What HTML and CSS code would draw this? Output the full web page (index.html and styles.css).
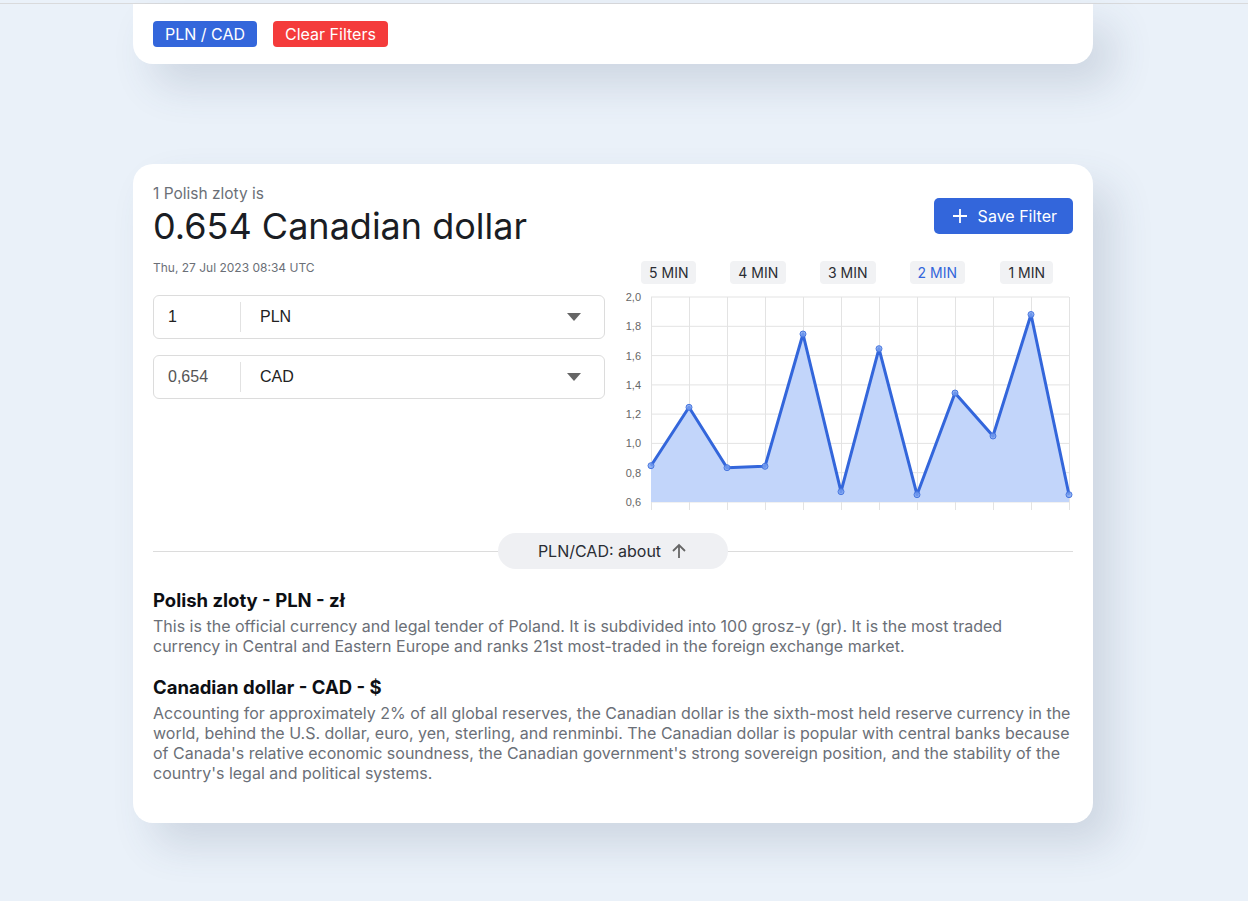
FILE: index.html
```html
<!DOCTYPE html>
<html>
<head>
<meta charset="utf-8">
<link rel="stylesheet" href="styles.css">
</head>
<body>
<div class="topline"></div>
<div class="filters card-top">
  <span class="tag tag-blue">PLN / CAD</span>
  <span class="tag tag-red">Clear Filters</span>
</div>

<div class="card">
  <div class="header">
    <div class="heading-block">
      <div class="sub">1 Polish zloty is</div>
      <div class="title">0.654 Canadian dollar</div>
    </div>
    <button class="save">
      <svg width="16" height="16" viewBox="0 0 16 16"><path d="M8 1v14M1 8h14" stroke="#fff" stroke-width="1.8" fill="none"/></svg>
      <span>Save Filter</span>
    </button>
  </div>

  <div class="main">
    <div class="left">
      <div class="date">Thu, 27 Jul 2023 08:34 UTC</div>
      <div class="field">
        <span class="amount">1</span>
        <span class="sep"></span>
        <span class="cur">PLN</span>
        <span class="caret"></span>
      </div>
      <div class="field">
        <span class="amount muted">0,654</span>
        <span class="sep"></span>
        <span class="cur">CAD</span>
        <span class="caret"></span>
      </div>
    </div>
    <div class="right">
      <div class="ranges">
        <span class="range">5 MIN</span>
        <span class="range">4 MIN</span>
        <span class="range">3 MIN</span>
        <span class="range active">2 MIN</span>
        <span class="range">1 MIN</span>
      </div>
      <svg class="chart" width="468" height="230" viewBox="0 0 468 230">
        <g stroke="#e3e3e3" stroke-width="1">
          <line x1="46" y1="9" x2="464" y2="9"/>
          <line x1="46" y1="38.3" x2="464" y2="38.3"/>
          <line x1="46" y1="67.6" x2="464" y2="67.6"/>
          <line x1="46" y1="96.9" x2="464" y2="96.9"/>
          <line x1="46" y1="126.1" x2="464" y2="126.1"/>
          <line x1="46" y1="155.4" x2="464" y2="155.4"/>
          <line x1="46" y1="184.7" x2="464" y2="184.7"/>
          <line x1="46" y1="214" x2="464" y2="214"/>
          <line x1="46.5" y1="9" x2="46.5" y2="222"/>
          <line x1="84.5" y1="9" x2="84.5" y2="222"/>
          <line x1="122.5" y1="9" x2="122.5" y2="222"/>
          <line x1="160.5" y1="9" x2="160.5" y2="222"/>
          <line x1="198.5" y1="9" x2="198.5" y2="222"/>
          <line x1="236.5" y1="9" x2="236.5" y2="222"/>
          <line x1="274.5" y1="9" x2="274.5" y2="222"/>
          <line x1="312.5" y1="9" x2="312.5" y2="222"/>
          <line x1="350.5" y1="9" x2="350.5" y2="222"/>
          <line x1="388.5" y1="9" x2="388.5" y2="222"/>
          <line x1="426.5" y1="9" x2="426.5" y2="222"/>
          <line x1="464.5" y1="9" x2="464.5" y2="222"/>
        </g>
        <g class="ticks" text-anchor="end">
          <text x="36" y="13">2,0</text>
          <text x="36" y="42.3">1,8</text>
          <text x="36" y="71.6">1,6</text>
          <text x="36" y="100.9">1,4</text>
          <text x="36" y="130.1">1,2</text>
          <text x="36" y="159.4">1,0</text>
          <text x="36" y="188.7">0,8</text>
          <text x="36" y="218">0,6</text>
        </g>
        <polygon fill="#c2d5fa" points="46,214 46,177.7 84,119.3 122,179.7 160,178.3 198,46 236,203.7 274,60.7 312,206.7 350,105 388,148 426,26.5 464,206.7 464,214"/>
        <polyline fill="none" stroke="#3366db" stroke-width="3" stroke-linejoin="round" points="46,177.7 84,119.3 122,179.7 160,178.3 198,46 236,203.7 274,60.7 312,206.7 350,105 388,148 426,26.5 464,206.7"/>
        <g fill="rgba(120,160,240,0.8)" stroke="#4a78e0" stroke-width="1">
          <circle cx="46" cy="177.7" r="3"/>
          <circle cx="84" cy="119.3" r="3"/>
          <circle cx="122" cy="179.7" r="3"/>
          <circle cx="160" cy="178.3" r="3"/>
          <circle cx="198" cy="46" r="3"/>
          <circle cx="236" cy="203.7" r="3"/>
          <circle cx="274" cy="60.7" r="3"/>
          <circle cx="312" cy="206.7" r="3"/>
          <circle cx="350" cy="105" r="3"/>
          <circle cx="388" cy="148" r="3"/>
          <circle cx="426" cy="26.5" r="3"/>
          <circle cx="464" cy="206.7" r="3"/>
        </g>
      </svg>
    </div>
  </div>

  <div class="divider">
    <span class="pill">PLN/CAD: about
      <svg width="18" height="18" viewBox="0 0 18 18"><path d="M9 16V3M3 9l6-6 6 6" stroke="#666" stroke-width="1.8" fill="none"/></svg>
    </span>
  </div>

  <div class="about">
    <h3>Polish zloty - PLN - zł</h3>
    <p>This is the official currency and legal tender of Poland. It is subdivided into 100 grosz-y (gr). It is the most traded currency in Central and Eastern Europe and ranks 21st most-traded in the foreign exchange market.</p>
    <h3>Canadian dollar - CAD - $</h3>
    <p>Accounting for approximately 2% of all global reserves, the Canadian dollar is the sixth-most held reserve currency in the world, behind the U.S. dollar, euro, yen, sterling, and renminbi. The Canadian dollar is popular with central banks because of Canada's relative economic soundness, the Canadian government's strong sovereign position, and the stability of the country's legal and political systems.</p>
  </div>
</div>
</body>
</html>
```

FILE: styles.css
```css
* { box-sizing: border-box; }
html, body { margin: 0; padding: 0; }
body {
  background: #eaf1f9;
  font-family: Inter, "Noto Sans", sans-serif;
  color: #1c1f26;
  height: 901px;
  overflow: hidden;
}
.topline {
  height: 4px;
  border-bottom: 1px solid #d9dadc;
  background: #eaf1f9;
}
.card-top {
  margin-left: 133px;
  width: 960px;
  height: 60px;
  background: #fff;
  border-radius: 0 0 20px 20px;
  box-shadow: 20px 22px 40px rgba(60, 80, 110, 0.16);
  padding: 17px 20px 0;
  display: flex;
  gap: 16px;
  align-items: flex-start;
}
.tag {
  height: 26px;
  line-height: 26px;
  padding: 0 12px;
  border-radius: 4px;
  color: #fff;
  font-size: 16px;
}
.tag-blue { background: #3366db; }
.tag-red { background: #f43b3b; }

.card {
  margin: 100px 0 0 133px;
  width: 960px;
  height: 659px;
  background: #fff;
  border-radius: 20px;
  box-shadow: 20px 22px 40px rgba(60, 80, 110, 0.16);
  padding: 20px 20px 0;
}
.header {
  display: flex;
  justify-content: space-between;
  align-items: flex-start;
  height: 77px;
}
.sub {
  font-size: 15.5px;
  line-height: 20px;
  color: #6b6f77;
}
.title {
  font-size: 36px;
  line-height: 44px;
  color: #1a1d24;
}
.save {
  margin-top: 14px;
  height: 36px;
  border: none;
  border-radius: 5px;
  background: #3366db;
  color: #fff;
  font-family: Inter, sans-serif;
  font-size: 16px;
  display: flex;
  align-items: center;
  gap: 10px;
  padding: 0 16px 0 18px;
  white-space: nowrap;
}
.main {
  display: flex;
}
.left {
  width: 452px;
}
.date {
  font-size: 12px;
  line-height: 14px;
  color: #6b6f77;
  margin-top: 0;
}
.field {
  margin-top: 20px;
  height: 44px;
  border: 1px solid #dcdcdc;
  border-radius: 6px;
  display: flex;
  align-items: center;
  font-family: "Liberation Sans", Arial, sans-serif;
  font-size: 16px;
  color: #222;
}
.field + .field { margin-top: 16px; }
.amount {
  width: 86px;
  padding-left: 14px;
}
.muted { color: #555; }
.sep {
  width: 1px;
  height: 30px;
  background: #e2e2e2;
}
.cur {
  flex: 1;
  padding-left: 19px;
}
.caret {
  width: 0;
  height: 0;
  border-left: 7px solid transparent;
  border-right: 7px solid transparent;
  border-top: 8px solid #666;
  margin-right: 23px;
}
.right {
  width: 468px;
}
.ranges {
  display: grid;
  grid-template-columns: repeat(5, 89.5px);
  padding-left: 19px;
  justify-items: center;
}
.range {
  height: 23px;
  line-height: 23px;
  padding: 0 8px;
  background: #f1f2f4;
  border-radius: 4px;
  font-size: 14px;
  color: #2a2d33;
}
.range.active { color: #3366db; }
.chart {
  display: block;
  margin-top: 4px;
}
.ticks text {
  font-family: "Liberation Sans", Arial, sans-serif;
  font-size: 11px;
  fill: #666;
}
.divider {
  margin-top: 15px;
  height: 36px;
  display: flex;
  justify-content: center;
  align-items: center;
  background: linear-gradient(#dcdcdc, #dcdcdc) no-repeat 0 18px / 100% 1px;
}
.pill {
  height: 36px;
  width: 230px;
  border-radius: 18px;
  background: #eff0f3;
  display: flex;
  align-items: center;
  justify-content: center;
  gap: 9px;
  font-size: 16px;
  color: #2a2d33;
}
.about h3 {
  margin: 19px 0 4px;
  font-size: 18.5px;
  line-height: 24px;
  font-weight: 700;
  color: #0d0f14;
}
.about p {
  margin: 0;
  font-size: 16px;
  line-height: 20px;
  color: #6b6f77;
}
```
